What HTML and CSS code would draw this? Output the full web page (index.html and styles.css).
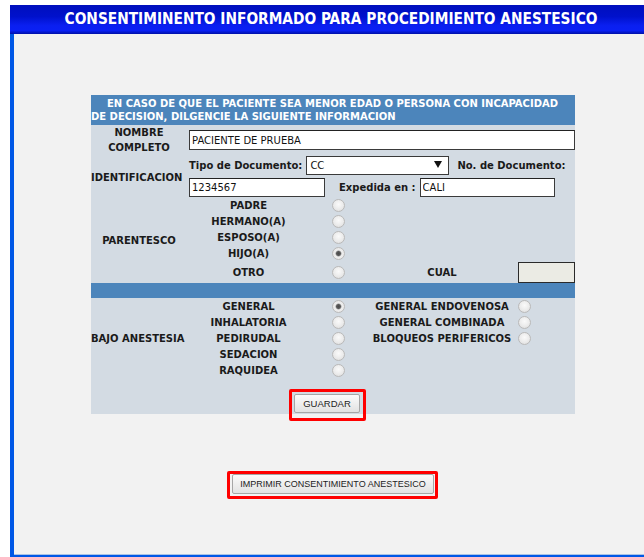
FILE: index.html
```html
<!DOCTYPE html>
<html>
<head>
  <meta name="viewport" content="width=device-width, initial-scale=1">
  <link rel="stylesheet" href="styles.css">
</head>
<body>
  <div class="page">
    <div class="title">CONSENTIMINENTO INFORMADO PARA PROCEDIMIENTO ANESTESICO</div>
    <div class="content">
      <table class="panel">
        <colgroup>
          <col class="c1"><col class="c2"><col class="c3"><col class="c4"><col class="c5">
        </colgroup>
        <tr>
          <td colspan="5" class="panel-head">EN CASO DE QUE EL PACIENTE SEA MENOR EDAD O PERSONA CON INCAPACIDAD DE DECISION, DILGENCIE LA SIGUIENTE INFORMACION</td>
        </tr>
        <tr class="row-name">
          <td class="lbl center two-line">NOMBRE<br>COMPLETO</td>
          <td colspan="4" class="field-cell"><input type="text" class="txt txt-name" value="PACIENTE DE PRUEBA"></td>
        </tr>
        <tr class="row-ident">
          <td class="lbl ident">IDENTIFICACION</td>
          <td colspan="4" class="field-cell">
            <div class="line">
              <span class="lbl-inline">Tipo de Documento:</span>
              <span class="select-wrap">
                <select class="sel"><option>CC</option></select>
                <svg class="arrow" width="8" height="7" viewBox="0 0 8 7"><path d="M0 0H8L4 7Z" fill="#111"/></svg>
              </span>
              <span class="lbl-inline doc-no">No. de Documento:</span>
            </div>
            <div class="line line2">
              <input type="text" class="txt txt-doc" value="1234567">
              <span class="lbl-inline exp">Expedida en :</span>
              <input type="text" class="txt txt-city" value="CALI">
            </div>
          </td>
        </tr>
        <tr class="opt">
          <td rowspan="5" class="lbl center">PARENTESCO</td>
          <td class="lbl center">PADRE</td>
          <td class="center"><input type="radio" name="par" class="rad"></td>
          <td></td><td></td>
        </tr>
        <tr class="opt">
          <td class="lbl center">HERMANO(A)</td>
          <td class="center"><input type="radio" name="par" class="rad"></td>
          <td></td><td></td>
        </tr>
        <tr class="opt">
          <td class="lbl center">ESPOSO(A)</td>
          <td class="center"><input type="radio" name="par" class="rad"></td>
          <td></td><td></td>
        </tr>
        <tr class="opt">
          <td class="lbl center">HIJO(A)</td>
          <td class="center"><input type="radio" name="par" class="rad" checked></td>
          <td></td><td></td>
        </tr>
        <tr class="opt-other">
          <td class="lbl center">OTRO</td>
          <td class="center"><input type="radio" name="par" class="rad"></td>
          <td class="lbl center">CUAL</td>
          <td><input type="text" class="txt txt-cual" disabled></td>
        </tr>
        <tr>
          <td colspan="5" class="sep"></td>
        </tr>
        <tr class="opt">
          <td rowspan="5" class="lbl">BAJO ANESTESIA</td>
          <td class="lbl center">GENERAL</td>
          <td class="center"><input type="radio" name="an" class="rad" checked></td>
          <td class="lbl center">GENERAL ENDOVENOSA</td>
          <td><input type="radio" name="an" class="rad"></td>
        </tr>
        <tr class="opt">
          <td class="lbl center">INHALATORIA</td>
          <td class="center"><input type="radio" name="an" class="rad"></td>
          <td class="lbl center">GENERAL COMBINADA</td>
          <td><input type="radio" name="an" class="rad"></td>
        </tr>
        <tr class="opt">
          <td class="lbl center">PEDIRUDAL</td>
          <td class="center"><input type="radio" name="an" class="rad"></td>
          <td class="lbl center">BLOQUEOS PERIFERICOS</td>
          <td><input type="radio" name="an" class="rad"></td>
        </tr>
        <tr class="opt">
          <td class="lbl center">SEDACION</td>
          <td class="center"><input type="radio" name="an" class="rad"></td>
          <td></td><td></td>
        </tr>
        <tr class="opt">
          <td class="lbl center">RAQUIDEA</td>
          <td class="center"><input type="radio" name="an" class="rad"></td>
          <td></td><td></td>
        </tr>
        <tr class="row-save">
          <td colspan="5" class="save-cell">
            <span class="mark mark-save"><button class="btn">GUARDAR</button></span>
          </td>
        </tr>
      </table>

      <div class="print-row">
        <span class="mark mark-print"><button class="btn btn-print">IMPRIMIR CONSENTIMIENTO ANESTESICO</button></span>
      </div>
    </div>
  </div>
</body>
</html>
```

FILE: styles.css
```css
html, body {
  margin: 0;
  padding: 0;
  overflow: hidden;
  background: #fff;
}
.page {
  margin: 5px 0 0 10px;
  width: 642px;
}
.title {
  height: 29px;
  line-height: 29px;
  text-align: center;
  color: #fff;
  font-family: "DejaVu Sans Condensed", "DejaVu Sans", sans-serif;
  font-stretch: condensed;
  font-weight: bold;
  font-size: 15.3px;
  white-space: nowrap;
  background: linear-gradient(#000fbd 0%, #0011cc 40%, #0a1ff0 70%, #0a20f4 88%, #0010a8 100%);
}
.content {
  height: 521px;
  background: #f2f2f2;
  border-left: 4px solid #0057e6;
  border-bottom: 2px solid #0057e6;
  box-shadow: inset 0 -1px 0 #a9c3e6;
  overflow: hidden;
}
.panel {
  width: 484px;
  margin: 61px auto 0;
  border-collapse: collapse;
  background: #d3dbe3;
  color: #1a1a1a;
  font-family: "DejaVu Sans", Verdana, sans-serif;
  font-size: 10px;
}
.panel td {
  padding: 0;
  vertical-align: middle;
}
.c1 { width: 96px; }
.c2 { width: 123px; }
.c3 { width: 56px; }
.c4 { width: 152px; }
.c5 { width: 57px; }
.panel-head {
  background: #4c85bb;
  color: #fff;
  font-weight: bold;
  line-height: 13px;
  padding: 2px 0 2px !important;
  text-indent: 16px;
}
.lbl {
  font-weight: bold;
  white-space: nowrap;
}
.center {
  text-align: center;
}
.two-line {
  line-height: 15px;
}
.row-name {
  height: 30px;
}
.field-cell {
  padding-left: 2px !important;
}
.txt {
  box-sizing: border-box;
  height: 20px;
  margin: 0;
  padding: 1px 2px 0;
  border: 1px solid #3a3a3a;
  border-top-color: #222;
  background: #fff;
  color: #111;
  font-family: "DejaVu Sans", Verdana, sans-serif;
  font-size: 10px;
  outline: none;
}
.txt-name {
  width: 386px;
  display: block;
}
.row-ident {
  height: 42px;
}
.ident {
  padding-top: 2px !important;
}
.line {
  display: flex;
  align-items: center;
  height: 19px;
}
.line2 {
  margin-top: 3px;
  height: 19px;
}
.lbl-inline {
  font-weight: bold;
  white-space: nowrap;
}
.select-wrap {
  position: relative;
  display: inline-block;
  margin-left: 4px;
}
.sel {
  display: block;
  box-sizing: border-box;
  width: 143px;
  height: 19px;
  margin: 0;
  padding: 0 0 0 3px;
  border: 1px solid #3a3a3a;
  border-radius: 0;
  background: #fff;
  color: #111;
  font-family: "DejaVu Sans", Verdana, sans-serif;
  font-size: 10px;
  appearance: none;
  -webkit-appearance: none;
}
.arrow {
  position: absolute;
  right: 7px;
  top: 5px;
}
.doc-no {
  margin-left: 8px;
}
.txt-doc {
  width: 136px;
  height: 19px;
}
.exp {
  margin: 0 4px 0 14px;
}
.txt-city {
  width: 135px;
  height: 19px;
}
.opt {
  height: 16px;
}
.opt-other {
  height: 22px;
}
.txt-cual {
  display: block;
  width: 57px;
  height: 21px;
  background: #ebebe4;
  border-color: #2a2a2a;
}
.rad {
  appearance: none;
  -webkit-appearance: none;
  display: block;
  box-sizing: border-box;
  width: 13px;
  height: 13px;
  margin: 0 auto;
  border: 1px solid #b9b9b9;
  border-radius: 50%;
  background: radial-gradient(circle at 50% 40%, #fafafa 0%, #ebebeb 55%, #d9d9d9 100%);
}
td:last-child > .rad {
  margin: 0;
}
.rad:checked {
  background: radial-gradient(circle, #4a4a4a 0, #5a5a5a 2px, #9a9a9a 2.6px, #eeeeee 3.4px, #e4e4e4 100%);
}
.sep {
  height: 15px;
  background: #4c85bb;
}
.row-save {
  height: 36px;
}
.save-cell {
  text-align: center;
  vertical-align: top !important;
  padding: 16px 12px 0 0 !important;
}
.mark {
  position: relative;
  display: inline-block;
  vertical-align: top;
}
.mark::after {
  content: "";
  position: absolute;
  border: 3px solid #f00;
  border-radius: 2px;
  pointer-events: none;
}
.mark-save::after {
  inset: -5px -6px -8px -5px;
}
.btn {
  display: block;
  height: 19px;
  margin: 0;
  padding: 0 8px;
  border: 1px solid #a6a6a6;
  border-radius: 2px;
  background: linear-gradient(#fbfbfb, #e2e2e2);
  color: #222;
  font-family: "Liberation Sans", Arial, sans-serif;
  font-size: 9.5px;
  cursor: pointer;
}
.print-row {
  margin-top: 60px;
  text-align: center;
  line-height: 0;
}
.btn-print {
  height: 20px;
  padding: 0 7px;
  font-size: 9px;
  line-height: normal;
}
.mark-print::after {
  inset: -3px -4px -5px -5px;
}
```
